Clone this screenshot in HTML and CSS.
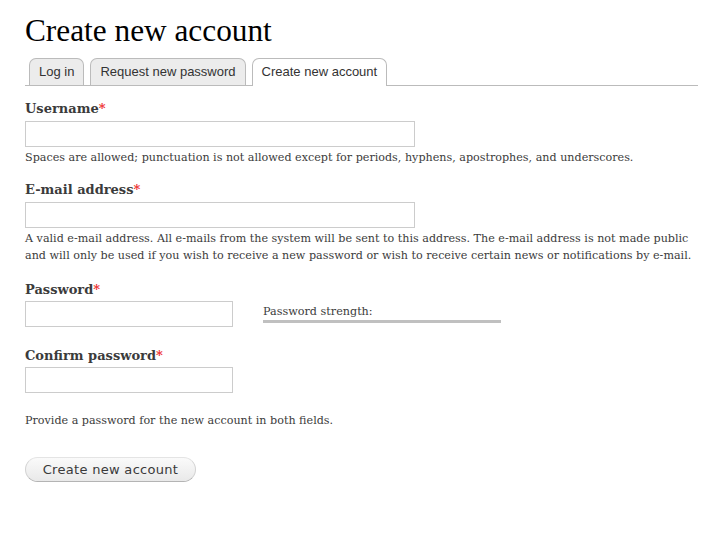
FILE: index.html
```html
<!DOCTYPE html>
<html>
<head>
<meta charset="utf-8">
<link rel="stylesheet" href="styles.css">
</head>
<body>
<div class="page">
  <h1 class="title">Create new account</h1>
  <ul class="tabs">
    <li><a class="tab">Log in</a></li>
    <li><a class="tab">Request new password</a></li>
    <li><a class="tab active">Create new account</a></li>
  </ul>
  <form class="form">
    <div class="item">
      <label class="label">Username<span class="req">*</span></label>
      <input class="input wide" type="text">
      <div class="desc">Spaces are allowed; punctuation is not allowed except for periods, hyphens, apostrophes, and underscores.</div>
    </div>
    <div class="item">
      <label class="label">E-mail address<span class="req">*</span></label>
      <input class="input wide" type="text">
      <div class="desc">A valid e-mail address. All e-mails from the system will be sent to this address. The e-mail address is not made public and will only be used if you wish to receive a new password or wish to receive certain news or notifications by e-mail.</div>
    </div>
    <div class="item pass">
      <label class="label tight">Password<span class="req">*</span></label>
      <div class="pass-row">
        <input class="input narrow" type="password">
        <div class="strength">
          <div class="strength-text">Password strength:</div>
          <div class="strength-bar"></div>
        </div>
      </div>
    </div>
    <div class="item confirm">
      <label class="label tight">Confirm password<span class="req">*</span></label>
      <input class="input narrow" type="password">
    </div>
    <div class="desc provide">Provide a password for the new account in both fields.</div>
    <div class="actions">
      <button class="submit" type="button">Create new account</button>
    </div>
  </form>
</div>
</body>
</html>
```
FILE: styles.css
```css
html, body {
  margin: 0;
  padding: 0;
  background: #fff;
}
body {
  font-family: "DejaVu Serif", "Liberation Serif", serif;
  color: #3b3b3b;
}
.page {
  padding: 0 14px 0 25px;
}
.title {
  margin: 0;
  padding-top: 13px;
  font-family: "Liberation Serif", serif;
  font-weight: normal;
  font-size: 31.3px;
  line-height: 36px;
  color: #000;
}
.tabs {
  list-style: none;
  margin: 9px 0 0 0;
  padding: 0 0 0 4px;
  display: flex;
  gap: 6px;
  border-bottom: 1px solid #bbb;
  height: 27px;
}
.tabs li {
  display: flex;
}
.tab {
  display: block;
  font-family: "Liberation Sans", Arial, sans-serif;
  font-size: 13px;
  line-height: 26px;
  padding: 0 9px;
  color: #333;
  background: #ececec;
  border: 1px solid #bbb;
  border-bottom: none;
  border-radius: 7px 7px 0 0;
  height: 27px;
  box-sizing: border-box;
}
.tab.active {
  background: #fff;
  height: 28px;
}
.form {
  padding-top: 14px;
}
.item {
  margin-bottom: 15px;
}
.label {
  display: block;
  font-weight: bold;
  font-size: 13px;
  line-height: 18px;
  margin-bottom: 3px;
}
.label.tight {
  margin-bottom: 2px;
}
.req {
  color: #e33;
}
.input {
  display: block;
  box-sizing: border-box;
  height: 26px;
  border: 1px solid #ccc;
  margin: 0;
  padding: 2px 4px;
  background: #fff;
}
.wide { width: 390px; }
.narrow { width: 208px; }
.desc {
  font-size: 11.15px;
  line-height: 17px;
  margin-top: 2px;
}
.pass-row {
  display: flex;
  align-items: flex-start;
}
.strength {
  margin-left: 30px;
  padding-top: 4px;
  width: 238px;
}
.strength-text {
  font-size: 11.2px;
  line-height: 13px;
}
.strength-bar {
  margin-top: 2px;
  height: 3px;
  background: #c0c0c0;
}
.pass { margin-top: 17px; margin-bottom: 20px; }
.confirm { margin-bottom: 19px; }
.provide { margin-top: 0; }
.actions {
  padding-top: 28px;
}
.submit {
  font-family: "DejaVu Sans", Verdana, sans-serif;
  font-size: 13px;
  color: #3a3a3a;
  height: 25px;
  width: 171px;
  padding: 0;
  letter-spacing: 0.3px;
  border: 1px solid #d2d2d2;
  border-top-color: #e4e4e4;
  border-bottom-color: #b4b4b4;
  border-radius: 13px;
  background: linear-gradient(#fafafa, #e9e9e9);
}
```
